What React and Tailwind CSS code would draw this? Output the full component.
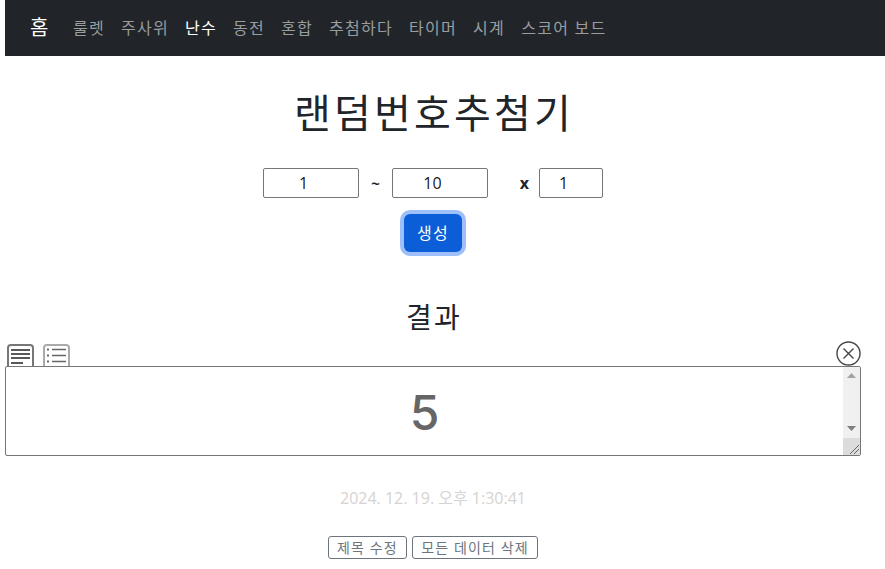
const F = "font-['Open_Sans','Noto_Sans_CJK_KR',sans-serif]";

const links = [
  ["룰렛", false],
  ["주사위", false],
  ["난수", true],
  ["동전", false],
  ["혼합", false],
  ["추첨하다", false],
  ["타이머", false],
  ["시계", false],
  ["스코어 보드", false],
];

function NumBox({ w, v }) {
  return (
    <div className={`${w} h-[30px] border border-[#767676] rounded-[2px] flex items-center justify-center pr-[15px] text-[16px] text-[#1a1a1a]`}>
      {v}
    </div>
  );
}

export default function App() {
  return (
    <div className={`${F} w-[885px] h-[569px] overflow-hidden bg-white pl-[5px] text-[#212529]`}>
      <nav className="h-[56px] bg-[#212529] flex items-center pl-[25px] tracking-[0.08em]">
        <span className="text-[20px] text-white w-[43px]">홈</span>
        <div className="flex gap-[16px] text-[16px] text-[#9a9da0]">
          {links.map(([t, a]) => (
            <span key={t} className={a ? "text-white" : ""}>{t}</span>
          ))}
        </div>
      </nav>

      <div className="w-[856px]">
        <h1 className="text-[40px] leading-[48px] text-center mt-[33px] pl-[2px] font-normal tracking-[0.08em]">랜덤번호추첨기</h1>

        <div className="flex items-center justify-center mt-[31px]">
          <NumBox w="w-[96px]" v="1" />
          <span className="w-[33px] text-center font-bold text-[15px]">~</span>
          <NumBox w="w-[96px]" v="10" />
          <span className="w-[51px] pr-[10px] text-right font-bold text-[16px]">x</span>
          <NumBox w="w-[64px]" v="1" />
        </div>

        <div className="flex justify-center mt-[16px]">
          <button className="w-[58px] h-[38px] rounded-[6px] bg-[#0b5ed7] text-white text-[16px] tracking-[0.08em] shadow-[0_0_0_4px_#9dc0fa]">
            생성
          </button>
        </div>

        <h2 className="text-[28px] leading-[34px] text-center font-normal mt-[48px] pl-[2px] tracking-[0.08em]">결과</h2>

        <div className="flex items-end justify-between mt-[8px] h-[24px]">
          <div className="flex gap-[9px] pl-[2px] mb-[-1px]">
            <svg width="27" height="23" viewBox="0 0 27 23" fill="none">
              <path d="M1 23V4a3 3 0 0 1 3-3h19a3 3 0 0 1 3 3v19" stroke="#777" strokeWidth="2" />
              <path d="M4 6h19M4 10h19M4 14h19M4 19h12" stroke="#222" strokeWidth="1.5" />
            </svg>
            <svg width="27" height="23" viewBox="0 0 27 23" fill="none">
              <path d="M1 22V4a3 3 0 0 1 3-3h19a3 3 0 0 1 3 3v18" stroke="#aaa" strokeWidth="2" />
              <path d="M9 5.5h14M9 11.5h14M9 17.5h14" stroke="#666" strokeWidth="1.3" />
              <path d="M4 5.5h2M4 11.5h2M4 17.5h2" stroke="#666" strokeWidth="2" />
            </svg>
          </div>
          <svg width="25" height="25" viewBox="0 0 25 25" fill="none">
            <circle cx="12.5" cy="12.5" r="11.5" stroke="#444" strokeWidth="1.4" />
            <path d="M7.5 7.5l10 10M17.5 7.5l-10 10" stroke="#444" strokeWidth="1.4" />
          </svg>
        </div>

        <div className="h-[90px] border border-[#767676] rounded-[2px] flex">
          <div className="flex-1 flex items-center justify-center text-[48px] font-['Inter',sans-serif] text-[#666] font-medium pt-[3px]">5</div>
          <div className="w-[17px] bg-[#f0f0f0] flex flex-col items-center justify-between">
            <svg width="9" height="5" viewBox="0 0 9 5" className="mt-[6px]"><path d="M0 5l4.5-5L9 5z" fill="#a3a3a3" /></svg>
            <div className="flex flex-col items-center w-full">
              <svg width="9" height="5" viewBox="0 0 9 5" className="mb-[7px]"><path d="M0 0l4.5 5L9 0z" fill="#7d7d7d" /></svg>
              <div className="w-full h-[17px] bg-[#dcdcdc] relative">
                <svg width="17" height="17" viewBox="0 0 17 17" className="absolute inset-0">
                  <path d="M7 16l9-9M11 16l5-5" stroke="#666" strokeWidth="1" />
                </svg>
              </div>
            </div>
          </div>
        </div>

        <p className="text-[16px] leading-[24px] text-center text-[#d6d3d1] mt-[30px]">2024. 12. 19. 오후 1:30:41</p>

        <div className="flex justify-center gap-[5px] mt-[26px]">
          <button className="w-[79px] h-[23px] rounded-[3px] border border-[#6c757d] text-[#6c757d] text-[14px] leading-none tracking-[0.08em]">제목 수정</button>
          <button className="w-[126px] h-[23px] rounded-[3px] border border-[#6c757d] text-[#6c757d] text-[14px] leading-none tracking-[0.08em]">모든 데이터 삭제</button>
        </div>
      </div>
    </div>
  );
}
